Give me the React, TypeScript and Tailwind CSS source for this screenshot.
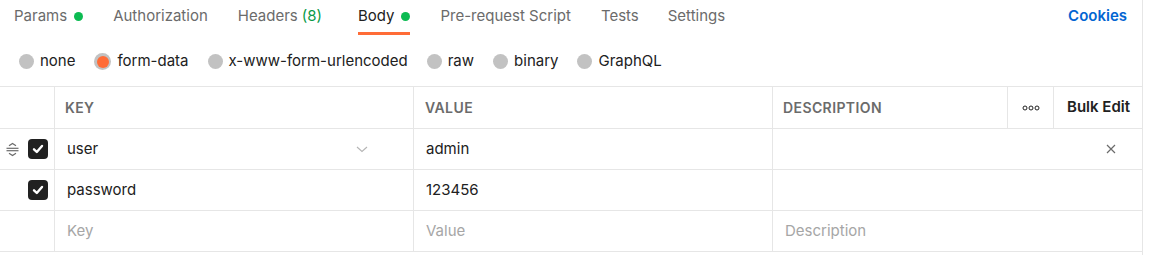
import React from "react";

const tabs = [
  { label: "Params", dot: true, gap: "" },
  { label: "Authorization", gap: "ml-[30px]" },
  { label: "Headers", count: "(8)", gap: "ml-[30px]" },
  { label: "Body", dot: true, active: true, gap: "ml-[36px]" },
  { label: "Pre-request Script", gap: "ml-[30px]" },
  { label: "Tests", gap: "ml-[30px]" },
  { label: "Settings", gap: "ml-[29px]" },
];

const bodyTypes = ["none", "form-data", "x-www-form-urlencoded", "raw", "binary", "GraphQL"];

function DragHandle() {
  return (
    <svg width="15" height="15" viewBox="0 0 15 15" fill="none" stroke="#6b6b6b" strokeWidth="1.2">
      <path d="M4 3.8 L7.5 1.5 L11 3.8" />
      <path d="M1.5 6.3 H13.5" />
      <path d="M1.5 8.7 H13.5" />
      <path d="M4 11.2 L7.5 13.5 L11 11.2" />
    </svg>
  );
}

function Checkbox() {
  return (
    <div className="flex h-[20px] w-[20px] items-center justify-center rounded-[4px] bg-[#212121]">
      <svg width="14" height="14" viewBox="0 0 14 14" fill="none" stroke="white" strokeWidth="2.4" strokeLinecap="round" strokeLinejoin="round">
        <path d="M3 7.3 L5.8 10 L11 4" />
      </svg>
    </div>
  );
}

function Chevron() {
  return (
    <svg width="12" height="8" viewBox="0 0 12 8" fill="none" stroke="#b5b5b5" strokeWidth="1.1">
      <path d="M1 2 L6 6.5 L11 2" />
    </svg>
  );
}

function CloseIcon() {
  return (
    <svg width="10" height="10" viewBox="0 0 10 10" fill="none" stroke="#6b6b6b" strokeWidth="1.2">
      <path d="M1 1 L9 9 M9 1 L1 9" />
    </svg>
  );
}

function Row({ k, v, first, placeholder }: { k: string; v: string; first?: boolean; placeholder?: boolean }) {
  const text = placeholder ? "text-[#a6a6a6]" : "text-[#212121]";
  return (
    <div className="flex h-[41px] border-b border-[#e6e6e6] text-[15px]">
      <div className="flex w-[55px] items-center border-r border-[#e6e6e6] pl-[5px]">
        <div className="flex w-[23px] items-center">{first && <DragHandle />}</div>
        {!placeholder && <Checkbox />}
      </div>
      <div className={`flex w-[359px] items-center justify-between border-r border-[#e6e6e6] pl-[12px] pr-[45px] ${text}`}>
        <span>{k}</span>
        {first && <Chevron />}
      </div>
      <div className={`flex w-[359px] items-center border-r border-[#e6e6e6] pl-[12px] ${text}`}>{v}</div>
      <div className="flex flex-1 items-center justify-between pl-[12px] pr-[26px] text-[#a6a6a6]">
        <span>{placeholder ? "Description" : ""}</span>
        {first && <CloseIcon />}
      </div>
    </div>
  );
}

export default function App() {
  return (
    <div className="h-[255px] w-[1155px] bg-white font-['Inter','Liberation_Sans',sans-serif]">
      <div className="h-full w-[1143px] border-r border-[#e6e6e6]">
        <div className="flex h-[35px] items-stretch pl-[14px] pr-[15px] text-[15px]">
          {tabs.map((t) => (
            <div
              key={t.label}
              className={`flex items-center gap-[7px] border-b-[3px] ${t.gap} ${
                t.active ? "border-[#ff6c37] text-[#212121]" : "border-transparent text-[#6b6b6b]"
              }`}
            >
              <span>
                {t.label}
                {t.count && <span className="ml-[4px] text-[#0a9a48]">{t.count}</span>}
              </span>
              {t.dot && <span className="h-[9px] w-[9px] rounded-full bg-[#0cbb52]" />}
            </div>
          ))}
          <div className="ml-auto flex items-center border-b-[3px] border-transparent font-semibold text-[#0265d2]">
            Cookies
          </div>
        </div>
        <div className="flex h-[51px] items-center gap-[19px] pl-[19px] pt-[2px] text-[15px] text-[#212121]">
          {bodyTypes.map((b) => (
            <div key={b} className="flex items-center gap-[6px]">
              {b === "form-data" ? (
                <span className="flex h-[17px] w-[17px] items-center justify-center rounded-full bg-[#c2c2c2]">
                  <span className="h-[12px] w-[12px] rounded-full bg-[#ff6c37]" />
                </span>
              ) : (
                <span className="h-[15px] w-[15px] rounded-full bg-[#c2c2c2]" />
              )}
              <span>{b}</span>
            </div>
          ))}
        </div>
        <div className="border-t border-[#e6e6e6]">
          <div className="flex h-[42px] border-b border-[#e6e6e6] text-[14px] font-semibold tracking-[0.4px]">
            <div className="w-[55px] border-r border-[#e6e6e6]" />
            <div className="flex w-[359px] items-center border-r border-[#e6e6e6] pl-[10px] text-[#6b6b6b]">KEY</div>
            <div className="flex w-[359px] items-center border-r border-[#e6e6e6] pl-[11px] text-[#6b6b6b]">VALUE</div>
            <div className="flex w-[235px] items-center border-r border-[#e6e6e6] pl-[10px] text-[#6b6b6b]">DESCRIPTION</div>
            <div className="flex w-[46px] items-center justify-center border-r border-[#e6e6e6]">
              <svg width="18" height="6" viewBox="0 0 18 6" fill="none" stroke="#212121" strokeWidth="1">
                <circle cx="3" cy="3" r="2" />
                <circle cx="9" cy="3" r="2" />
                <circle cx="15" cy="3" r="2" />
              </svg>
            </div>
            <div className="flex flex-1 items-center pl-[13px] text-[15px] tracking-normal text-[#212121]">Bulk Edit</div>
          </div>
          <Row k="user" v="admin" first />
          <Row k="password" v="123456" />
          <Row k="Key" v="Value" placeholder />
        </div>
      </div>
    </div>
  );
}
